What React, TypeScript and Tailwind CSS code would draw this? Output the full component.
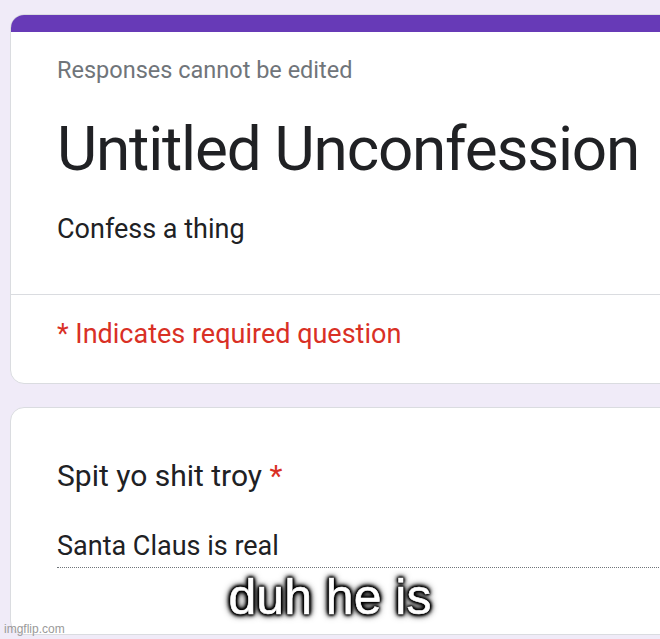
import React from "react";

export default function App() {
  const roboto = { fontFamily: "Roboto, 'Noto Sans', sans-serif" };
  return (
    <div
      className="relative w-[660px] h-[639px] overflow-hidden bg-[#f0ebf8]"
      style={roboto}
    >
      <div className="pt-[14px] pl-[10px] flex flex-col gap-[23px]">
        {/* Card 1 */}
        <div className="w-[720px] h-[370px] bg-white rounded-[14px] border border-[#dadce0] overflow-hidden flex flex-col">
          <div className="h-[18px] bg-[#673ab7] -mx-px -mt-px shrink-0" />
          <div className="pl-[46px] pt-[27px] flex flex-col">
            <div className="text-[23.5px] leading-[23.5px] text-[#70757a]">
              Responses cannot be edited
            </div>
            <div className="mt-[35px] text-[62px] leading-[62px] tracking-[-1.2px] text-[#202124]">
              Untitled Unconfession
            </div>
            <div className="mt-[36px] text-[27px] leading-[27px] text-[#202124]">
              Confess a thing
            </div>
          </div>
          <div className="mt-[51px] h-px bg-[#dadce0]" />
          <div className="pl-[46px] mt-[26px] text-[27px] leading-[27px] text-[#d93025]">
            * Indicates required question
          </div>
        </div>
        {/* Card 2 */}
        <div className="w-[720px] h-[228px] bg-white rounded-[14px] border border-[#dadce0] flex flex-col pl-[46px] pt-[53px]">
          <div className="text-[30px] leading-[30px] text-[#202124]">
            Spit yo shit troy <span className="text-[#d93025]">*</span>
          </div>
          <div className="mt-[42px] text-[27px] leading-[27px] text-[#202124]">
            Santa Claus is real
          </div>
          <div className="mt-[7px] border-b border-dotted border-[#70757a]" />
        </div>
      </div>

      {/* meme caption overlay */}
      <div
        className="absolute left-0 right-0 top-[572px] text-center text-white text-[50px] leading-[50px]"
        style={{
          fontFamily: "'Liberation Sans', Arial, sans-serif",
          WebkitTextStroke: "0.6px #fff",
          textShadow:
            "0 0 1px #000, 0 0 2px #000, 0 0 2px #000, 0 0 3px #000, 0 0 3px #000, 0 0 4px #000, 0 0 4px #000, 0 0 5px #000, 0 0 6px #000, 0 0 8px #000",
        }}
      >
        duh he is
      </div>
      <div
        className="absolute left-[4px] top-[622px] text-[12px] leading-[14px] text-[#9a9a9a]"
        style={{ fontFamily: "'Liberation Sans', Arial, sans-serif" }}
      >
        imgflip.com
      </div>
    </div>
  );
}
